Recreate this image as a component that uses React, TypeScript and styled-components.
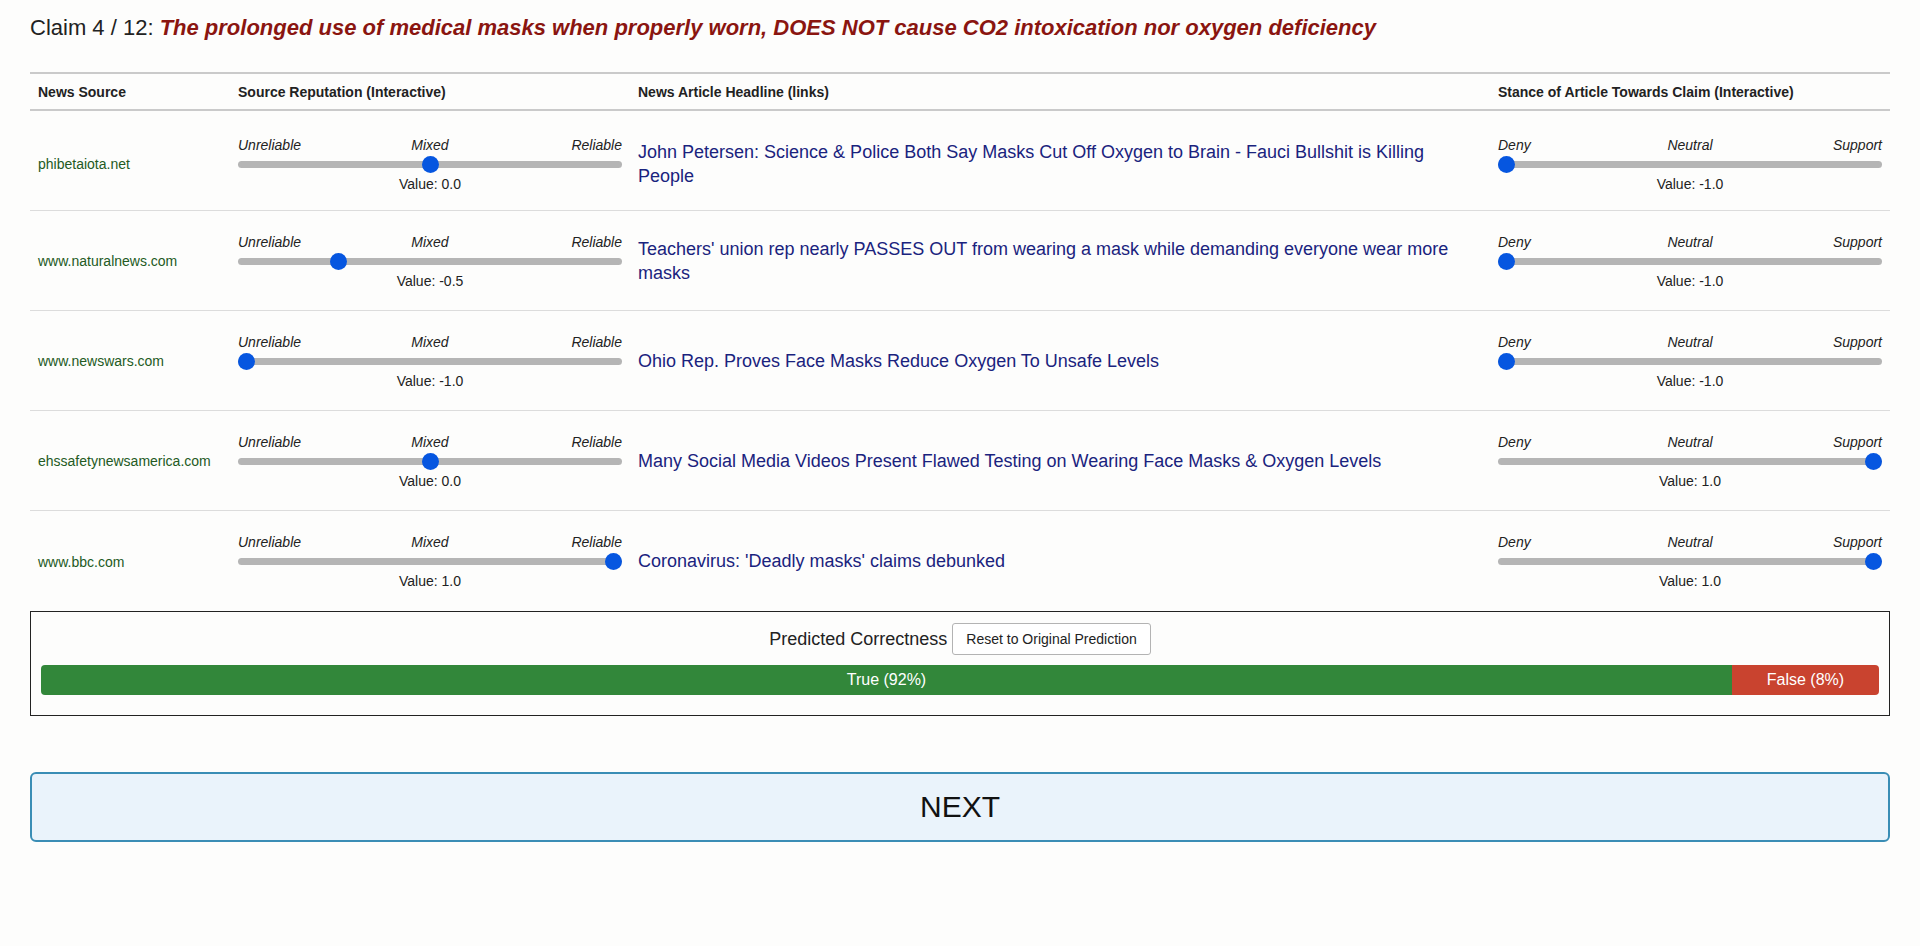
import React, { useState } from "react";
import styled, { createGlobalStyle } from "styled-components";

const GlobalStyle = createGlobalStyle`
  html, body {
    margin: 0;
    padding: 0;
    background: #fdfdfc;
    font-family: "Liberation Sans", Arial, sans-serif;
    color: #222;
  }
`;

const Page = styled.div`
  padding: 0 30px;
`;

const Title = styled.div`
  margin-top: 15px;
  font-size: 22px;
  line-height: 26px;
  color: #222;
`;

const ClaimText = styled.span`
  font-weight: bold;
  font-style: italic;
  color: #8a1510;
`;

const Table = styled.div`
  margin-top: 31px;
`;

const HeaderRow = styled.div`
  display: grid;
  grid-template-columns: 200px 400px 1fr 400px;
  border-top: 2px solid #cacaca;
  border-bottom: 2px solid #cacaca;
`;

const HeaderCell = styled.div`
  padding: 10px 8px 9px;
  font-size: 14px;
  line-height: 16px;
  font-weight: bold;
  color: #222;
`;

const Row = styled.div<{ $last?: boolean; $first?: boolean }>`
  display: grid;
  grid-template-columns: 200px 400px 1fr 400px;
  align-items: center;
  height: 100px;
  box-sizing: border-box;
  padding-top: ${(p) => (p.$first ? "7px" : "1px")};
  border-bottom: ${(p) => (p.$last ? "none" : "1px solid #dcdcdc")};
`;

const SourceCell = styled.div`
  padding: 0 8px;
  font-size: 14px;
  line-height: 16px;
  color: #235a23;
`;

const HeadlineCell = styled.div`
  padding: 0 8px;
`;

const Headline = styled.a`
  font-size: 18px;
  line-height: 24.4px;
  color: #1a237e;
  text-decoration: none;
  cursor: pointer;
`;

const SliderCell = styled.div`
  padding: 0 8px;
  display: flex;
  flex-direction: column;
`;

const LabelRow = styled.div`
  display: grid;
  grid-template-columns: 1fr auto 1fr;
  font-size: 14px;
  line-height: 16px;
  font-style: italic;
  color: #222;
`;

const Label = styled.span<{ $align: "left" | "center" | "right" }>`
  text-align: ${(p) => p.$align};
`;

const Range = styled.input`
  -webkit-appearance: none;
  appearance: none;
  display: block;
  width: 100%;
  height: 17px;
  margin: 3px 0;
  padding: 0;
  background: transparent;
  cursor: pointer;

  &::-webkit-slider-runnable-track {
    height: 7px;
    background: #b5b5b5;
    border-radius: 4px;
  }
  &::-webkit-slider-thumb {
    -webkit-appearance: none;
    appearance: none;
    width: 17px;
    height: 17px;
    border-radius: 50%;
    border: none;
    background: #0656e0;
    margin-top: -5px;
  }
  &::-moz-range-track {
    height: 7px;
    background: #b5b5b5;
    border-radius: 4px;
  }
  &::-moz-range-thumb {
    width: 17px;
    height: 17px;
    border-radius: 50%;
    border: none;
    background: #0656e0;
  }
  &:focus {
    outline: none;
  }
`;

const ValueText = styled.div`
  font-size: 14px;
  line-height: 16px;
  text-align: center;
  color: #222;
`;

const PredictionBox = styled.div`
  border: 1px solid #222;
  padding: 11px 10px 20px;
`;

const PredictionHeader = styled.div`
  display: flex;
  justify-content: center;
  align-items: center;
  gap: 5px;
  font-size: 18px;
  color: #222;
`;

const ResetButton = styled.button`
  height: 32px;
  padding: 0 13px;
  font-family: "Liberation Sans", Arial, sans-serif;
  font-size: 14px;
  color: #222;
  background: #fff;
  border: 1px solid #b3b3b3;
  border-radius: 3px;
  cursor: pointer;
`;

const Bar = styled.div`
  margin-top: 10px;
  display: flex;
  height: 30px;
  border-radius: 4px;
  overflow: hidden;
`;

const BarSegment = styled.div<{ $color: string }>`
  background: ${(p) => p.$color};
  color: #fff;
  font-size: 16px;
  display: flex;
  align-items: center;
  justify-content: center;
`;

const NextButton = styled.button`
  display: block;
  width: 100%;
  margin-top: 56px;
  height: 70px;
  background: #eaf3fb;
  border: 2px solid #3a8db5;
  border-radius: 6px;
  font-family: "Liberation Sans", Arial, sans-serif;
  font-size: 30px;
  color: #111;
  cursor: pointer;
`;

type Item = {
  source: string;
  rep: number;
  headline: string;
  stance: number;
};

const initial: Item[] = [
  {
    source: "phibetaiota.net",
    rep: 0,
    headline:
      "John Petersen: Science & Police Both Say Masks Cut Off Oxygen to Brain - Fauci Bullshit is Killing People",
    stance: -1,
  },
  {
    source: "www.naturalnews.com",
    rep: -0.5,
    headline:
      "Teachers' union rep nearly PASSES OUT from wearing a mask while demanding everyone wear more masks",
    stance: -1,
  },
  {
    source: "www.newswars.com",
    rep: -1,
    headline: "Ohio Rep. Proves Face Masks Reduce Oxygen To Unsafe Levels",
    stance: -1,
  },
  {
    source: "ehssafetynewsamerica.com",
    rep: 0,
    headline:
      "Many Social Media Videos Present Flawed Testing on Wearing Face Masks & Oxygen Levels",
    stance: 1,
  },
  {
    source: "www.bbc.com",
    rep: 1,
    headline: "Coronavirus: 'Deadly masks' claims debunked",
    stance: 1,
  },
];

function LabeledSlider({
  labels,
  value,
  onChange,
}: {
  labels: [string, string, string];
  value: number;
  onChange: (v: number) => void;
}) {
  return (
    <SliderCell>
      <LabelRow>
        <Label $align="left">{labels[0]}</Label>
        <Label $align="center">{labels[1]}</Label>
        <Label $align="right">{labels[2]}</Label>
      </LabelRow>
      <Range
        type="range"
        min={-1}
        max={1}
        step={0.1}
        value={value}
        onChange={(e) => onChange(parseFloat(e.target.value))}
      />
      <ValueText>Value: {value.toFixed(1)}</ValueText>
    </SliderCell>
  );
}

export default function App() {
  const [items, setItems] = useState<Item[]>(initial);

  const update = (i: number, key: "rep" | "stance", v: number) =>
    setItems((prev) => prev.map((it, j) => (j === i ? { ...it, [key]: v } : it)));

  return (
    <Page>
      <GlobalStyle />
      <Title>
        Claim 4 / 12:{" "}
        <ClaimText>
          The prolonged use of medical masks when properly worn, DOES NOT cause CO2
          intoxication nor oxygen deficiency
        </ClaimText>
      </Title>
      <Table>
        <HeaderRow>
          <HeaderCell>News Source</HeaderCell>
          <HeaderCell>Source Reputation (Interactive)</HeaderCell>
          <HeaderCell>News Article Headline (links)</HeaderCell>
          <HeaderCell>Stance of Article Towards Claim (Interactive)</HeaderCell>
        </HeaderRow>
        {items.map((it, i) => (
          <Row
            key={it.source}
            $first={i === 0}
            $last={i === items.length - 1}
          >
            <SourceCell>{it.source}</SourceCell>
            <LabeledSlider
              labels={["Unreliable", "Mixed", "Reliable"]}
              value={it.rep}
              onChange={(v) => update(i, "rep", v)}
            />
            <HeadlineCell>
              <Headline>{it.headline}</Headline>
            </HeadlineCell>
            <LabeledSlider
              labels={["Deny", "Neutral", "Support"]}
              value={it.stance}
              onChange={(v) => update(i, "stance", v)}
            />
          </Row>
        ))}
      </Table>
      <PredictionBox>
        <PredictionHeader>
          Predicted Correctness
          <ResetButton onClick={() => setItems(initial)}>
            Reset to Original Prediction
          </ResetButton>
        </PredictionHeader>
        <Bar>
          <BarSegment $color="#32873a" style={{ width: "92%" }}>
            True (92%)
          </BarSegment>
          <BarSegment $color="#c9432f" style={{ width: "8%" }}>
            False (8%)
          </BarSegment>
        </Bar>
      </PredictionBox>
      <NextButton>NEXT</NextButton>
    </Page>
  );
}
